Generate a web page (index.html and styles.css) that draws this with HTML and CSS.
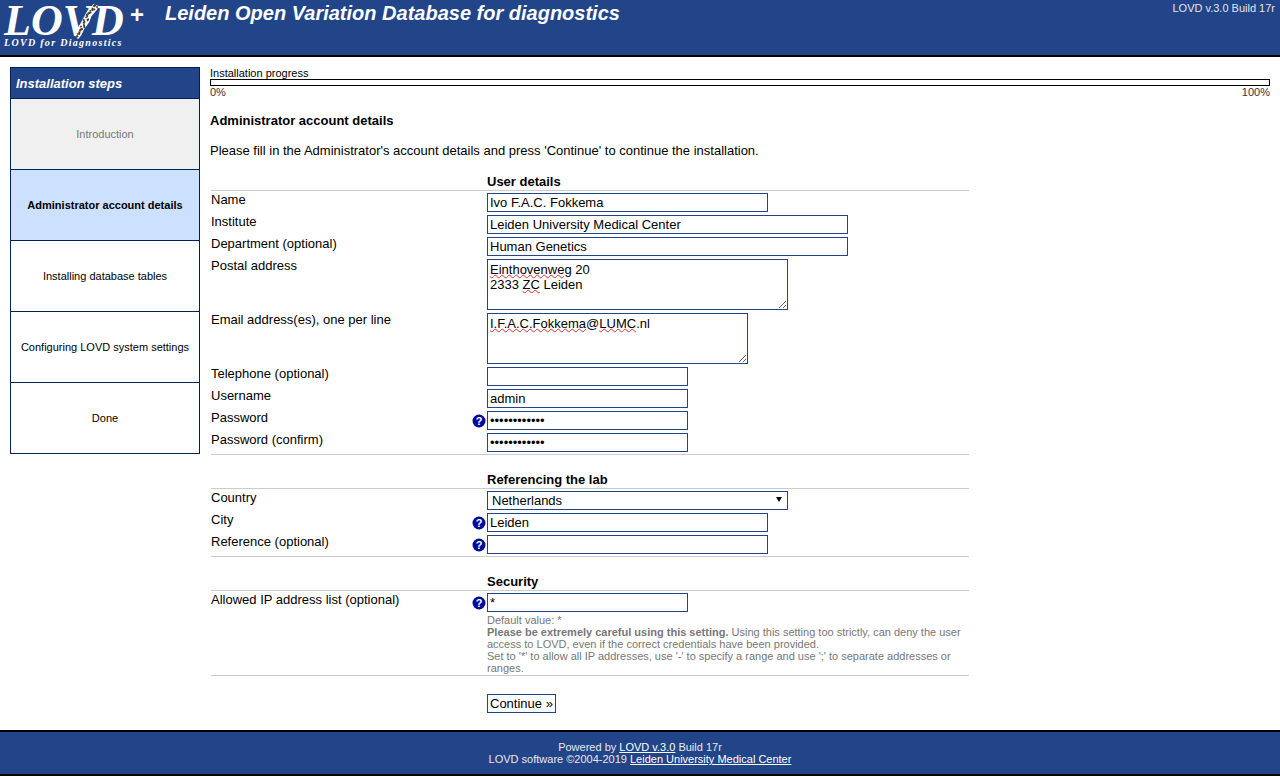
FILE: index.html
```html
<!DOCTYPE html>
<html lang="en">
  <head>
    <meta charset="UTF-8" />
    <title>LOVD 3.0 - Installation</title>
    <link rel="stylesheet" href="styles.css">
  </head>
  <body>
    <header class="top">
      <div class="logo">
        <div class="logo-mark">
          <span class="logo-word">LOVD</span>
          <svg class="logo-helix" width="26" height="36" viewBox="0 0 26 36">
            <path class="halo" d="M23 2 C21 8 16 9 15 14 C14 20 9 22 8 26 C7 29 5 32 3 34"/>
            <path class="strand-a" d="M23 2 C17 4 22 8 16 10 C10 12 19 16 13 18 C7 20 15 24 9 26 C4 28 9 31 3 34"/>
            <path class="strand-b" d="M24 3 C25 8 15 6 15 11 C15 16 10 13 11 19 C12 24 7 21 7 27 C7 31 4 30 3 34"/>
          </svg>
          <span class="logo-plus">+</span>
        </div>
        <div class="logo-sub">LOVD for Diagnostics</div>
      </div>
      <h1>Leiden Open Variation Database for diagnostics</h1>
      <div class="version">LOVD v.3.0 Build 17r</div>
    </header>

    <div class="main">
      <nav class="steps">
        <div class="steps-title">Installation steps</div>
        <div class="step step-done">Introduction</div>
        <div class="step step-current">Administrator account details</div>
        <div class="step">Installing database tables</div>
        <div class="step">Configuring LOVD system settings</div>
        <div class="step">Done</div>
      </nav>

      <div class="content">
        <div class="progress-label">Installation progress</div>
        <div class="progress-bar"></div>
        <div class="progress-ends"><span>0%</span><span>100%</span></div>

        <h2>Administrator account details</h2>
        <p class="intro">Please fill in the Administrator's account details and press 'Continue' to continue the installation.</p>

        <table class="form">
          <tr class="section"><td></td><th>User details</th></tr>
          <tr>
            <td>Name</td>
            <td><input class="w-280" type="text" value="Ivo F.A.C. Fokkema"></td>
          </tr>
          <tr>
            <td>Institute</td>
            <td><input class="w-360" type="text" value="Leiden University Medical Center"></td>
          </tr>
          <tr>
            <td>Department (optional)</td>
            <td><input class="w-360" type="text" value="Human Genetics"></td>
          </tr>
          <tr>
            <td>Postal address</td>
            <td><div class="area w-300"><span class="typo">Einthovenweg</span> 20<br>2333 <span class="typo">ZC</span> Leiden</div></td>
          </tr>
          <tr>
            <td>Email address(es), one per line</td>
            <td><div class="area w-260"><span class="typo">I.F.A.C.Fokkema</span>@<span class="typo">LUMC</span>.nl</div></td>
          </tr>
          <tr>
            <td>Telephone (optional)</td>
            <td><input class="w-200" type="text"></td>
          </tr>
          <tr>
            <td>Username</td>
            <td><input class="w-200" type="text" value="admin"></td>
          </tr>
          <tr>
            <td class="has-help">Password<svg class="help" viewBox="0 0 14 14"><circle cx="7" cy="7" r="6.5"/><text x="7" y="10.6">?</text></svg></td>
            <td><input class="w-200" type="password" value="aaaaaaaaaaaa"></td>
          </tr>
          <tr class="last">
            <td>Password (confirm)</td>
            <td><input class="w-200" type="password" value="aaaaaaaaaaaa"></td>
          </tr>

          <tr class="section gap"><td></td><th>Referencing the lab</th></tr>
          <tr>
            <td>Country</td>
            <td>
              <div class="select w-300">
                <select>
                  <option>Netherlands</option>
                </select>
              </div>
            </td>
          </tr>
          <tr>
            <td class="has-help">City<svg class="help" viewBox="0 0 14 14"><circle cx="7" cy="7" r="6.5"/><text x="7" y="10.6">?</text></svg></td>
            <td><input class="w-280" type="text" value="Leiden"></td>
          </tr>
          <tr class="last">
            <td class="has-help">Reference (optional)<svg class="help" viewBox="0 0 14 14"><circle cx="7" cy="7" r="6.5"/><text x="7" y="10.6">?</text></svg></td>
            <td><input class="w-280" type="text"></td>
          </tr>

          <tr class="section gap"><td></td><th>Security</th></tr>
          <tr class="last">
            <td class="has-help">Allowed IP address list (optional)<svg class="help" viewBox="0 0 14 14"><circle cx="7" cy="7" r="6.5"/><text x="7" y="10.6">?</text></svg></td>
            <td>
              <input class="w-200" type="text" value="*">
              <div class="note">
                Default value: *<br>
                <b>Please be extremely careful using this setting.</b> Using this setting too strictly, can deny the user access to LOVD, even if the correct credentials have been provided.<br>
                Set to '*' to allow all IP addresses, use '-' to specify a range and use ';' to separate addresses or ranges.
              </div>
            </td>
          </tr>
          <tr class="submit">
            <td></td>
            <td><button type="button">Continue &raquo;</button></td>
          </tr>
        </table>
      </div>
    </div>

    <footer class="bottom">
      Powered by <a href="#">LOVD v.3.0</a> Build 17r<br>
      LOVD software &copy;2004-2019 <a href="#">Leiden University Medical Center</a>
    </footer>
  </body>
</html>
```

FILE: styles.css
```css
/* General styles */
html, body {
  margin: 0;
  padding: 0;
}

body {
  font-family: "Liberation Sans", Arial, sans-serif;
  font-size: 13px;
  color: #000;
  background-color: #fff;
  height: 776px;
  display: flex;
  flex-direction: column;
  overflow: hidden;
}

/* Header */
.top {
  display: flex;
  height: 55px;
  flex-shrink: 0;
  background-color: #224488;
  border-bottom: 2px solid #000;
  color: #fff;
}

.logo {
  width: 165px;
  flex-shrink: 0;
  padding-left: 4px;
  box-sizing: border-box;
}

.logo-mark {
  position: relative;
  height: 35px;
  padding-top: 2px;
}

.logo-word {
  display: block;
  font-family: "Liberation Serif", serif;
  font-style: italic;
  font-weight: bold;
  font-size: 44px;
  line-height: 37px;
}

.logo-helix {
  position: absolute;
  left: 69px;
  top: 3px;
}

.logo-helix path {
  fill: none;
}

.logo-helix .halo {
  stroke: #fff;
  stroke-width: 6;
}

.logo-helix .strand-a {
  stroke: #24492e;
  stroke-width: 2;
  stroke-dasharray: 3 1.5;
}

.logo-helix .strand-b {
  stroke: #8a3f2c;
  stroke-width: 1.8;
  stroke-dasharray: 2 2;
}

.logo-plus {
  position: absolute;
  left: 126px;
  top: 1px;
  font-size: 24px;
  line-height: 28px;
  font-weight: bold;
}

.logo-sub {
  font-family: "Liberation Serif", serif;
  font-style: italic;
  font-weight: bold;
  font-size: 10px;
  letter-spacing: 1.3px;
  line-height: 12px;
}

.top h1 {
  margin: 2px 0 0;
  font-size: 20px;
  line-height: 23px;
  font-style: italic;
  font-weight: bold;
}

.version {
  margin-left: auto;
  padding: 2px 5px 0 0;
  font-size: 11px;
  line-height: 13px;
  color: #e4e4ee;
}

/* Page layout */
.main {
  flex: 1;
  display: flex;
  gap: 10px;
  padding: 10px 10px 0;
}

/* Installation steps */
.steps {
  width: 190px;
  height: 387px;
  flex-shrink: 0;
  box-sizing: border-box;
  border: 1px solid #002255;
}

.steps-title {
  height: 30px;
  line-height: 31px;
  padding-left: 5px;
  background-color: #224488;
  color: #fff;
  font-size: 13px;
  font-weight: bold;
  font-style: italic;
  border-bottom: 1px solid #002255;
}

.step {
  height: 70px;
  display: flex;
  align-items: center;
  justify-content: center;
  text-align: center;
  font-size: 11px;
  border-bottom: 1px solid #002255;
}

.step:last-child {
  border-bottom: 0;
}

.step-done {
  background-color: #f0f0f0;
  color: #777;
}

.step-current {
  background-color: #cce0ff;
  font-weight: bold;
}

/* Progress */
.content {
  flex: 1;
}

.progress-label {
  font-size: 11px;
  line-height: 12px;
}

.progress-bar {
  height: 5px;
  border: 1px solid #000;
}

.progress-ends {
  display: flex;
  justify-content: space-between;
  font-size: 11px;
  line-height: 13px;
  color: #333;
}

h2 {
  margin: 14px 0 0;
  font-size: 13px;
  line-height: 15px;
}

.intro {
  margin: 15px 0 0;
  line-height: 15px;
}

/* Form table */
.form {
  margin: 15px 0 0 1px;
  width: 758px;
  border-collapse: collapse;
  table-layout: fixed;
}

.form td,
.form th {
  padding: 0;
  vertical-align: top;
  text-align: left;
}

.form td:first-child {
  width: 276px;
  padding-top: 1px;
  line-height: 15px;
}

.section th {
  height: 16px;
  font-size: 13px;
  line-height: 15px;
  padding-top: 1px;
}

.section {
  border-bottom: 1px solid #ccc;
}

.section.gap th {
  padding-top: 17px;
}

.form tr.last {
  border-bottom: 1px solid #ccc;
}

.form tr.last > td {
  padding-bottom: 1px;
}

.has-help {
  position: relative;
}

.help {
  position: absolute;
  right: 1px;
  top: 5px;
  width: 14px;
  height: 14px;
}

.help circle {
  fill: #000c99;
}

.help text {
  fill: #fff;
  font-size: 11px;
  font-weight: bold;
  text-anchor: middle;
}

input,
.select,
button,
.area {
  display: block;
  box-sizing: border-box;
  font-family: "Liberation Sans", Arial, sans-serif;
  font-size: 13px;
  color: #000;
  background-color: #fff;
  border: 1px solid #224488;
  border-radius: 0;
  margin: 2px 0 1px;
}

input {
  height: 19px;
  padding: 0 2px;
}

.select {
  position: relative;
  height: 19px;
}

/* little arrow of the dropdown */
.select::after {
  content: "";
  position: absolute;
  right: 5px;
  top: 5px;
  border-left: 3px solid transparent;
  border-right: 3px solid transparent;
  border-top: 5px solid #000;
}

.select select {
  display: block;
  width: 100%;
  height: 100%;
  margin: 0;
  padding: 0 0 0 4px;
  border: 0;
  background: transparent;
  font: inherit;
  color: inherit;
  appearance: none;
}

.area {
  height: 51px;
  padding: 2px;
  line-height: 15px;
  overflow: auto;
  resize: both;
}

.w-200 { width: 201px; }
.w-260 { width: 261px; }
.w-280 { width: 281px; }
.w-300 { width: 301px; }
.w-360 { width: 361px; }

.typo {
  text-decoration: underline wavy #e03030 1px;
  text-underline-offset: 0;
}

.note {
  margin-top: 2px;
  font-size: 11px;
  line-height: 12px;
  color: #777;
}

.submit td {
  padding-top: 18px;
}

button {
  height: 19px;
  padding: 0 2px;
  margin: 0;
}

/* Footer */
.bottom {
  height: 33px;
  flex-shrink: 0;
  border-top: 2px solid #000;
  border-bottom: 2px solid #000;
  background-color: #224488;
  color: #e8e8e8;
  text-align: center;
  font-size: 11px;
  line-height: 12px;
  padding-top: 9px;
}

.bottom a {
  color: #fff;
}
```
